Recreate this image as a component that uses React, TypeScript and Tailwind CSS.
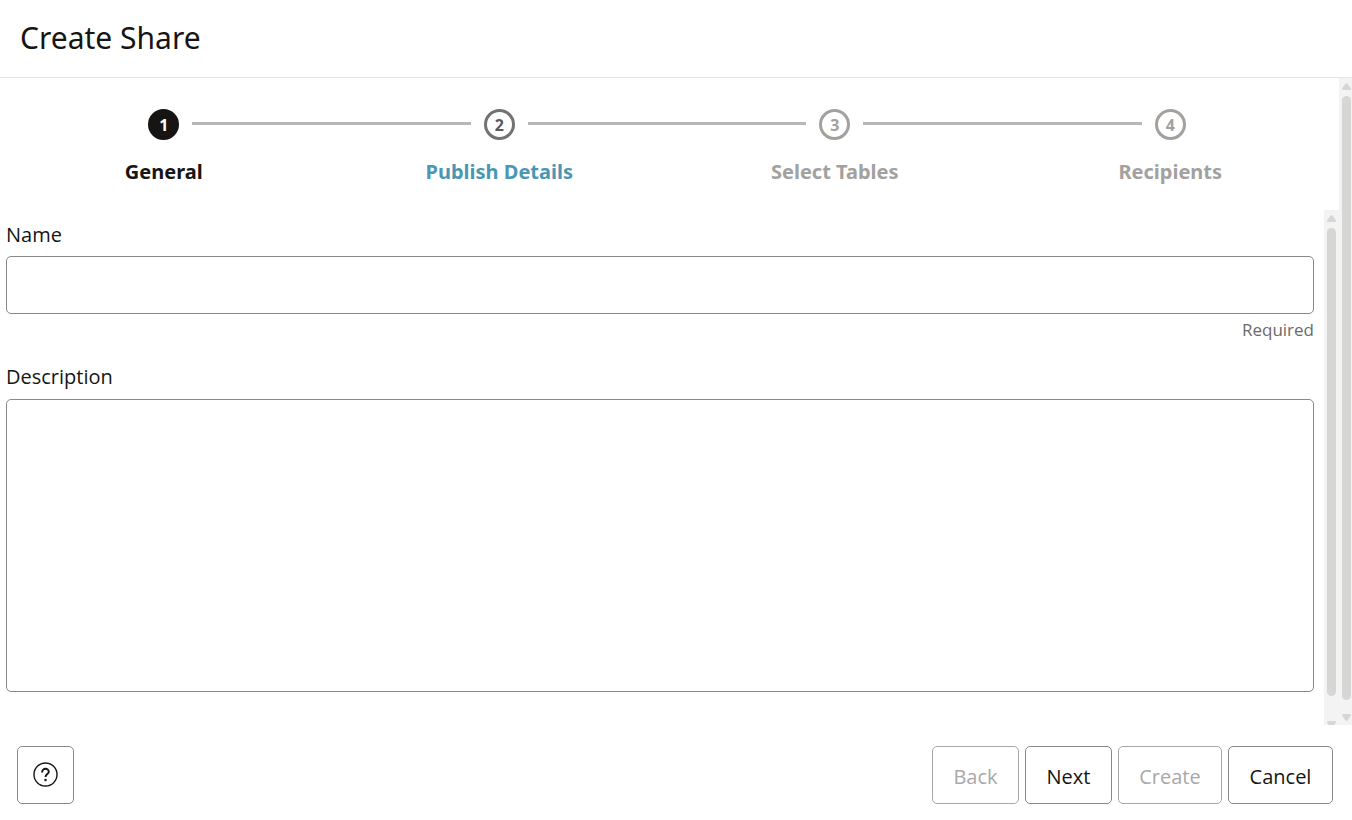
import { useState } from "react";

type StepState = "current" | "next" | "upcoming";

const steps: { label: string; state: StepState }[] = [
  { label: "General", state: "current" },
  { label: "Publish Details", state: "next" },
  { label: "Select Tables", state: "upcoming" },
  { label: "Recipients", state: "upcoming" },
];

const circleStyles: Record<StepState, string> = {
  current: "border-[#161513] bg-[#161513] text-white",
  next: "border-[#737271] text-[#5b5a59]",
  upcoming: "border-[#a2a1a0] text-[#a2a1a0]",
};

const labelStyles: Record<StepState, string> = {
  current: "text-[#161513]",
  next: "text-[#4b97b3]",
  upcoming: "text-[#a2a1a0]",
};

function Train() {
  return (
    <ol className="mr-px -ml-1 grid h-[132px] grid-cols-4 pt-[31px] font-['Noto_Sans',sans-serif]">
      {steps.map((step, i) => (
        <li key={step.label} className="flex flex-col items-center">
          <div className="flex w-full items-center">
            <span className={`mb-0.5 h-[3px] flex-1 ${i === 0 ? "" : "bg-[#b7b7b6]"}`} />
            <span
              className={`mx-[13px] flex size-[31px] items-center justify-center rounded-full border-3 text-base leading-none font-bold ${circleStyles[step.state]}`}
            >
              {i + 1}
            </span>
            <span className={`mb-0.5 h-[3px] flex-1 ${i === steps.length - 1 ? "" : "bg-[#b7b7b6]"}`} />
          </div>
          {step.state === "next" ? (
            <a href="#publish-details" className={`mt-[18px] text-xl leading-7 font-bold ${labelStyles[step.state]}`}>
              {step.label}
            </a>
          ) : (
            <span className={`mt-[18px] text-xl leading-7 font-bold ${labelStyles[step.state]}`}>{step.label}</span>
          )}
        </li>
      ))}
    </ol>
  );
}

function Arrow({ down = false }: { down?: boolean }) {
  return (
    <svg viewBox="0 0 9 7" className={`h-[7px] w-[9px] shrink-0 ${down ? "rotate-180" : ""}`} aria-hidden="true">
      <path d="M3.6.6Q4.5-.4 5.4.6L8.7 5Q9.4 7 8 7H1Q-.4 7 .3 5Z" fill="#d6d6d4" />
    </svg>
  );
}

export default function App() {
  const [name, setName] = useState("");
  const [description, setDescription] = useState("");
  const button = "h-[58px] rounded-[5px] border pt-1 text-xl";
  const enabled = "border-[#8a8988] text-[#161513]";
  const disabled = "border-[#a8a7a6] text-[#a9a8a7]";

  return (
    <div className="flex h-screen flex-col bg-white font-['Open_Sans','Noto_Sans',sans-serif] text-[#161513]">
      <header className="flex h-[78px] shrink-0 items-center border-b border-[#e4e4e3] px-5 pb-0.5">
        <h1 className="font-['Noto_Sans',sans-serif] text-3xl leading-10">Create Share</h1>
      </header>

      <main className="flex min-h-0 flex-1">
        <div className="flex min-w-0 flex-1 flex-col">
          <Train />
          <div className="flex min-h-0 flex-1">
            <form className="flex min-w-0 flex-1 flex-col pr-2.5 pb-[33px] pl-1.5">
              <label htmlFor="name" className="mt-[11px] mb-[7px] text-xl leading-7">
                Name
              </label>
              <input
                id="name"
                value={name}
                onChange={(e) => setName(e.target.value)}
                className="h-[58px] w-full shrink-0 rounded-[5px] border border-[#8a8988] px-4 text-xl"
              />
              <p className="mt-1 text-right text-[17px] leading-6 text-[#6b6a69]">Required</p>
              <label htmlFor="description" className="mt-[21px] mb-2 text-xl leading-7">
                Description
              </label>
              <textarea
                id="description"
                value={description}
                onChange={(e) => setDescription(e.target.value)}
                className="min-h-0 w-full flex-1 resize-none rounded-[5px] border border-[#8a8988] px-4 py-3 text-xl"
              />
            </form>
            <div className="flex w-[15px] flex-col items-center overflow-hidden bg-[#f3f3f3] pt-[5px]">
              <Arrow />
              <div className="mt-1.5 mb-[25px] w-[9px] flex-1 rounded-full bg-[#d6d6d4]" />
              <div className="h-1 shrink-0 overflow-hidden">
                <Arrow down />
              </div>
            </div>
          </div>
        </div>
        <div className="flex w-[13px] flex-col bg-[#f3f3f3] pt-[5px] pb-1 pl-[3px]">
          <Arrow />
          <div className="mt-1.5 mb-3.5 w-[9px] flex-1 rounded-full bg-[#d6d6d4]" />
          <Arrow down />
        </div>
      </main>

      <footer className="flex h-[95px] shrink-0 items-center justify-between pt-[5px] pr-[19px] pl-[17px]">
        <button
          type="button"
          aria-label="Help"
          className="flex h-[58px] w-[57px] items-center justify-center rounded-[5px] border border-[#8a8988]"
        >
          <svg viewBox="0 0 25 26" className="h-[26px] w-[25px]" fill="none" stroke="#161513" aria-hidden="true">
            <circle cx="12.5" cy="12.5" r="11.5" strokeWidth="1.4" />
            <path d="M9.2 10.4v-.6a3.3 3 0 0 1 6.6 0c0 2.2-3.3 2.4-3.3 5.2" strokeWidth="1.9" />
            <circle cx="12.5" cy="18" r="1.25" fill="#161513" stroke="none" />
          </svg>
        </button>
        <div className="flex gap-1.5">
          <button type="button" disabled className={`${button} ${disabled} w-[87px]`}>
            Back
          </button>
          <button type="button" className={`${button} ${enabled} w-[87px]`}>
            Next
          </button>
          <button type="button" disabled className={`${button} ${disabled} w-[104px]`}>
            Create
          </button>
          <button type="button" className={`${button} ${enabled} w-[105px]`}>
            Cancel
          </button>
        </div>
      </footer>
    </div>
  );
}
